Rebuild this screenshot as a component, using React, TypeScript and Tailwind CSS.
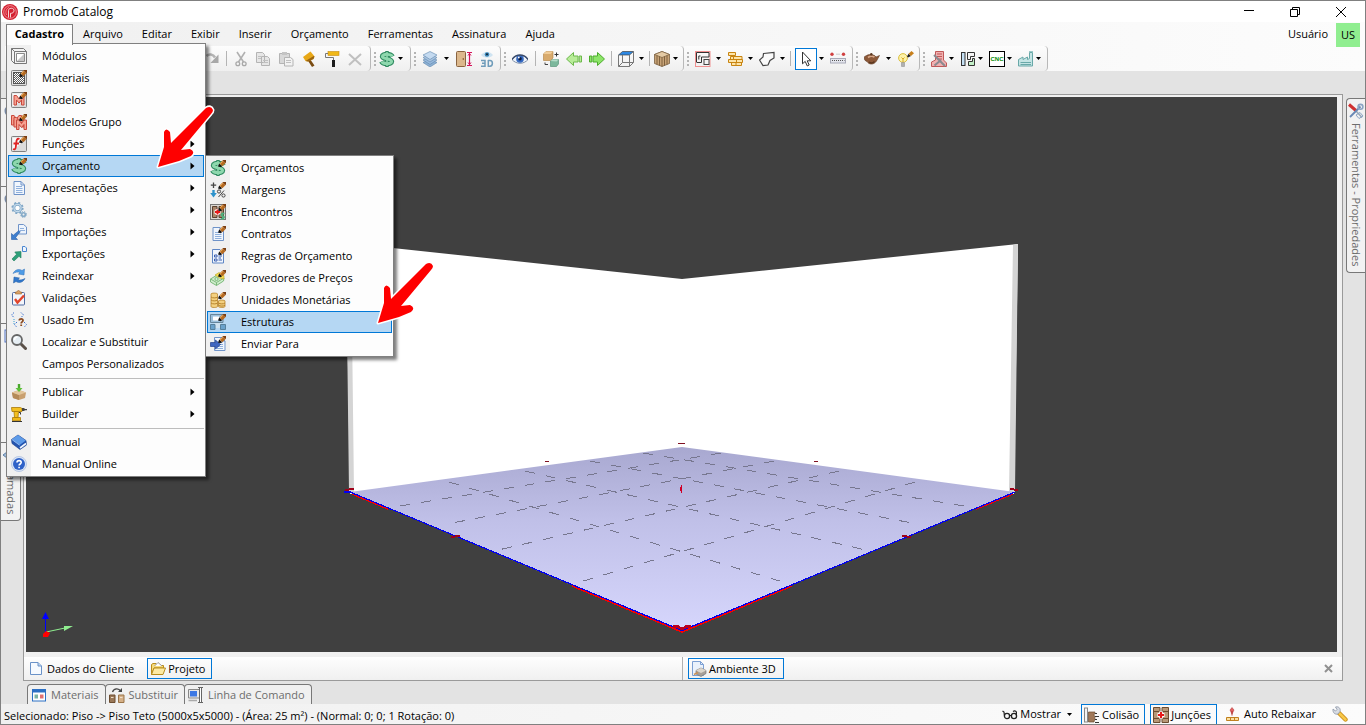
import React from "react";

type IconProps = { children: React.ReactNode; size?: string };

function Ic({ children, size = "size-4" }: IconProps) {
  return (
    <svg viewBox="0 0 16 16" className={`${size} shrink-0`} fill="none" aria-hidden="true">
      {children}
    </svg>
  );
}

const Pencil = () => (
  <g>
    <path d="M8 6.5 L9.2 3.6 L12 6 L11 7.2 Z" fill="#151515" />
    <path d="M9.5 3.6 L12.5 0.6 L15.6 3 L12.4 6.2 Z" fill="#b5691f" />
    <path d="M12.5 0.6 L13.4 0 H16 V2.4 L15.6 3 Z" fill="#7a3d10" />
    <path d="M10.2 3.9 L12.8 1.4" stroke="#f0b060" />
  </g>
);

const Frame = () => (
  <g>
    <rect x="0.5" y="0.5" width="15" height="15" rx="1" fill="#dcdcdc" stroke="#808080" />
    <path d="M1.5 1.5 H14 V3 L3 14 H1.5 Z" fill="#f8f8f8" />
  </g>
);

const MShape = () => <path d="M3 13 V3.5 H5.6 L8 7 L10.4 3.5 H13 V13 H10.5 V8 L8 11 L5.5 8 V13 Z" fill="#f6a090" stroke="#c8483c" />;

const Dollar = () => (
  <g>
    <path d="M8 0 V16" stroke="#2f8a60" strokeWidth="3.4" />
    <path d="M13.4 5.6 C12 2.6 3.2 2.4 3.2 5.4 C3.2 8.4 12.8 7.4 12.8 10.6 C12.8 13.6 3.8 13.4 2.4 10.4" stroke="#2f8a60" strokeWidth="4.8" />
    <path d="M8 1 V15" stroke="#9adcb6" strokeWidth="1.4" />
    <path d="M13.2 5.4 C11.8 2.8 3.4 2.6 3.4 5.4 C3.4 8.2 12.6 7.4 12.6 10.6 C12.6 13.4 4 13.2 2.8 10.6" stroke="#8ed8ae" strokeWidth="3" />
  </g>
);

const Page = () => (
  <g>
    <path d="M3 1.5 H10 L13.5 5 V14.5 H3 Z" fill="#f1f6fd" stroke="#6f93c8" />
    <path d="M10 1.5 V5 H13.5" stroke="#6f93c8" />
    <path d="M5 6.5 H11 M5 8.5 H11.5 M5 10.5 H11.5 M5 12.5 H11.5" stroke="#8fb0dc" />
  </g>
);

const I = {
  modules: (
    <Ic>
      <path d="M0.5 0.5 H12.5 L15.5 3.5 V15.5 H3.5 L0.5 12.5 Z" fill="#f3f3f3" stroke="#777" />
      <path d="M3.5 3.5 H15.5 M3.5 3.5 V15.5 M0.5 0.5 L3.5 3.5" stroke="#777" />
      <path d="M5.5 5.5 H13.5 V13.5 H5.5 Z" fill="#fff" stroke="#8a8a8a" />
      <path d="M13 6 V13 H6 Z" fill="#c6c6c6" />
    </Ic>
  ),
  materials: (
    <Ic>
      <Frame />
      <rect x="2.5" y="2.5" width="11" height="11" fill="#fff" stroke="#555" />
      <path d="M3 3.5 H13 M3 5.5 H13 M3 7.5 H13 M3 9.5 H13 M3 11.5 H13" stroke="#555" strokeDasharray="1 1" />
      <path d="M4 4.5 H13 M4 6.5 H13 M4 8.5 H13 M4 10.5 H13 M4 12.5 H13" stroke="#666" strokeDasharray="1 1" />
      <Pencil />
    </Ic>
  ),
  models: (<Ic><Frame /><MShape /><Pencil /></Ic>),
  group: (
    <Ic>
      <g transform="translate(-2.5 -2)"><MShape /></g>
      <g><MShape /></g>
      <g transform="translate(2.5 2.5)"><MShape /></g>
      <Pencil />
    </Ic>
  ),
  func: (
    <Ic>
      <Frame />
      <path d="M8.5 3 C6 2 5.5 4 5.2 7 L4.8 11 C4.6 13.4 3.4 13.6 2 13 M2.5 7.5 H8" stroke="#e02424" strokeWidth="1.8" />
      <Pencil />
    </Ic>
  ),
  budget: (<Ic><Dollar /><Pencil /></Ic>),
  dollar: (<Ic><Dollar /></Ic>),
  page: (<Ic><Page /></Ic>),
  gears: (
    <Ic>
      <circle cx="6.5" cy="6" r="5.2" stroke="#7fa6c6" strokeWidth="1.8" strokeDasharray="2 2.1" />
      <circle cx="6.5" cy="6" r="3.6" fill="#fff" stroke="#7fa6c6" strokeWidth="2.6" />
      <circle cx="6.5" cy="6" r="3.6" stroke="#c4daec" strokeWidth="1.2" />
      <circle cx="12.5" cy="12.5" r="1.8" stroke="#86abc8" strokeWidth="1.6" />
      <circle cx="12.5" cy="12.5" r="3" stroke="#86abc8" strokeDasharray="1.2 1.2" />
    </Ic>
  ),
  imports: (
    <Ic>
      <path d="M7.5 0.5 H12.5 L15.5 3 V10 H7.5 Z" fill="#eef4fc" stroke="#6f93c8" />
      <path d="M9 4.5 H13 M9 6.5 H14" stroke="#8fb0dc" />
      <path d="M0.5 15.5 V9.5 L2.3 11.2 L8 6.5 L9.2 7.8 L4.7 13.5 L6.5 15.5 Z" fill="#3f7fce" stroke="#2b5fa8" strokeWidth="0.6" />
    </Ic>
  ),
  exports: (
    <Ic>
      <path d="M11.5 0.5 H14 L15.5 2 V5.5 H11.5 Z" fill="#eef4fc" stroke="#4a86d0" />
      <path d="M10 5.5 V12 L8 10.3 L3 15 L1 13 L5.5 8.3 L3.8 6 Z" fill="#2fa07a" stroke="#1f7d5c" strokeWidth="0.6" />
    </Ic>
  ),
  reindex: (
    <Ic>
      <path d="M2 5.5 C4 1.5 8 0.5 11 2.5 L13.5 1 L13 7 L7.5 6 L9 4.6 C7 3.6 4.5 4.2 2 5.5 Z" fill="#4d9be6" stroke="#2f6fb8" strokeWidth="0.5" />
      <path d="M14 10.5 C12 14.5 8 15.5 5 13.5 L2.5 15 L3 9 L8.5 10 L7 11.4 C9 12.4 11.5 11.8 14 10.5 Z" fill="#2f77cc" stroke="#215aa0" strokeWidth="0.5" />
    </Ic>
  ),
  valid: (
    <Ic>
      <rect x="1.5" y="2.5" width="12" height="12.5" rx="1" fill="#f3f5fb" stroke="#4f6aa0" />
      <path d="M4.5 4 V2 H6 C6 0 9 0 9 2 H10.5 V4 Z" fill="#d9a066" stroke="#a06a30" strokeWidth="0.6" />
      <path d="M4 9 L6.5 12.5 L13 5.5" stroke="#e2452c" strokeWidth="2.4" />
    </Ic>
  ),
  used: (
    <Ic>
      <path d="M3 0.5 L0.5 3 L3 5.5 M10 0.5 L12.5 3 L10 5.5 M6 10 L3.5 12.5 L6 15.5 M13 10 L15.5 12.5 L13 15.5" stroke="#3a6fd0" strokeDasharray="1.5 1" />
      <path d="M3 7 V12" stroke="#3aa0d0" strokeDasharray="1 1" />
      <path d="M8.3 8.5 C8.3 6.2 12 6.2 12 8.5 C12 10 10.2 9.8 10.2 11.4 M10.2 12.4 V14" stroke="#8a4a20" strokeWidth="1.8" />
    </Ic>
  ),
  find: (
    <Ic>
      <path d="M9.5 9.5 L14.5 14.5" stroke="#5a5048" strokeWidth="3" strokeLinecap="round" />
      <circle cx="6" cy="6" r="5" fill="#e6eef4" stroke="#666" strokeWidth="1.8" />
      <path d="M3.5 6 C3.5 4 5 3 6.5 3" stroke="#fff" strokeWidth="1.4" />
    </Ic>
  ),
  publish: (
    <Ic>
      <path d="M1 8.5 L8 6 L15 8.5 L14 14 L8 16 L2 14 Z" fill="#c9a070" />
      <path d="M1 8.5 L8 11 V16 L2 14 Z" fill="#b48a58" />
      <path d="M1 8.5 L8 6 L15 8.5 L8 11 Z" fill="#e2c69c" />
      <path d="M8 0 V5" stroke="#4aa82c" strokeWidth="2.4" />
      <path d="M4.5 4 H11.5 L8 8 Z" fill="#5cc038" />
    </Ic>
  ),
  drill: (
    <Ic>
      <path d="M0.5 1.5 H9.5 L11 2.5 V5.5 H1 Z" fill="#f4c020" stroke="#a87a08" strokeWidth="0.8" />
      <path d="M11 2 H13.5 V5 H11 Z M13.5 3 H16 V4.2 H13.5 Z" fill="#444" />
      <path d="M3 5.5 H7.5 L7 11.5 H3.5 Z" fill="#f4c020" stroke="#a87a08" strokeWidth="0.8" />
      <path d="M1.5 11.5 H9.5 V14.8 H1.5 Z" fill="#f0b818" stroke="#a87a08" strokeWidth="0.8" />
      <path d="M8 6.5 H9.5 V8.5 M1 15.5 H11" stroke="#333" />
    </Ic>
  ),
  book: (
    <Ic>
      <path d="M0.5 5.5 L7 1 L15 6.5 L15.5 11 L9 15.5 L1 9.5 Z" fill="#2455b0" stroke="#173c86" strokeWidth="0.6" />
      <path d="M0.8 5.3 L7 1 L14.8 6.5 L8.6 11 Z" fill="#5e9be8" />
      <path d="M9 14 L15 9.5" stroke="#f4f8ff" strokeWidth="1.6" />
      <path d="M1 5.6 L8.6 11.2" stroke="#a8ccf8" strokeWidth="0.8" />
    </Ic>
  ),
  help: (
    <Ic>
      <circle cx="8" cy="8" r="7.5" fill="#dce6f6" stroke="#b8c8e4" />
      <circle cx="8" cy="8" r="6" fill="#2f62c8" />
      <path d="M6 6.5 C6 4 10.2 4 10.2 6.5 C10.2 8 8.1 8 8.1 9.6 M8.1 10.8 V12.2" stroke="#fff" strokeWidth="1.6" />
    </Ic>
  ),
  margins: (
    <Ic>
      <path d="M3.5 0.5 V6 M0.8 3.2 H6.2" stroke="#444" strokeWidth="1.3" />
      <path d="M3.5 8 V12" stroke="#2e93cc" strokeWidth="2.4" />
      <path d="M0.2 11 H6.8 L3.5 15.5 Z" fill="#2e93cc" />
      <circle cx="9" cy="9.5" r="1.6" stroke="#444" /><circle cx="13.5" cy="13.5" r="1.6" stroke="#444" />
      <path d="M14 8.5 L8.5 15" stroke="#444" />
      <Pencil />
    </Ic>
  ),
  meets: (
    <Ic>
      <rect x="0.5" y="0.5" width="15" height="15" fill="#dcd8d2" stroke="#777" />
      <path d="M2.5 2.5 H7 V13.5 H2.5 Z M9 2.5 H13.5 V13.5 H9 Z" fill="#a88468" stroke="#5a4030" />
      <path d="M7.5 5 V11 M4.5 8 H10.5" stroke="#fff" strokeWidth="3.6" />
      <path d="M7.5 5.5 V10.5 M5 8 H10" stroke="#e81818" strokeWidth="2" />
      <path d="M14.5 9.5 C10.5 8.5 10.5 12 12.7 12 C15.2 12.5 14.5 15.5 10.8 14.5 M12.7 8.5 V16" stroke="#4fae7c" strokeWidth="1.4" />
      <Pencil />
    </Ic>
  ),
  contract: (<Ic><Page /><Pencil /></Ic>),
  rules: (
    <Ic>
      <path d="M2.5 1.5 H10 L13.5 5 V15 H2.5 Z" fill="#f1f6fd" stroke="#5f86c4" />
      <path d="M4.5 7 H7 V9 H4.5 Z M4.5 11 H7 V13 H4.5 Z" stroke="#3a5fb0" />
      <path d="M8.5 8 H12 M8.5 12 H12 M8.5 10 H11" stroke="#3a5fb0" />
      <Pencil />
    </Ic>
  ),
  providers: (
    <Ic>
      <path d="M0.5 9 L8 4.5 L14 8 L13.5 11 L6.5 15.5 L0.5 12 Z" fill="#cfeccc" stroke="#7cba7c" />
      <path d="M0.5 9 L6.5 12.5 L14 8 M6.5 12.5 V15.5" stroke="#7cba7c" />
      <path d="M5 5 L9 2.5 L14 5.5 V9 L9.5 8 Z" fill="#f4dc50" stroke="#b8a020" strokeWidth="0.6" />
      <circle cx="6.5" cy="9" r="1.6" stroke="#7cba7c" />
      <Pencil />
    </Ic>
  ),
  coins: (
    <Ic>
      <path d="M1 2 C1 0.8 7.5 0.8 7.5 2 V14.5 C7.5 15.8 1 15.8 1 14.5 Z" fill="#f3d080" stroke="#b8842c" strokeWidth="0.8" />
      <path d="M1 5 C2.5 6.2 6 6.2 7.5 5 M1 8 C2.5 9.2 6 9.2 7.5 8 M1 11 C2.5 12.2 6 12.2 7.5 11" stroke="#b8842c" />
      <path d="M8.5 9 C8.5 7.8 15 7.8 15 9 V14.5 C15 15.8 8.5 15.8 8.5 14.5 Z" fill="#f3d080" stroke="#b8842c" strokeWidth="0.8" />
      <path d="M8.5 11 C10 12.2 13.5 12.2 15 11 M8.5 13.2 C10 14.4 13.5 14.4 15 13.2" stroke="#b8842c" />
      <Pencil />
    </Ic>
  ),
  structures: (
    <Ic>
      <path d="M0.5 0.5 H13 V8.5 H0.5 Z" fill="#9cc0dc" stroke="#66869c" />
      <path d="M3 2.5 H9 V6.5 H3 Z" fill="#fff" />
      <path d="M4.5 9 H11 V14 H4.5 Z" fill="#cfe2f0" />
      <path d="M0.5 10.5 H5 V15.5 H0.5 Z M10.5 10.5 H15.5 V15.5 H10.5 Z" fill="#6aa2cc" stroke="#56809c" />
      <Pencil />
    </Ic>
  ),
  send: (
    <Ic>
      <g transform="translate(1.5 0)"><Page /></g>
      <path d="M0.5 6.5 H5.5 V4 L10.5 8.5 L5.5 13 V10.5 H0.5 Z" fill="#3f66c0" stroke="#223f8c" strokeWidth="0.7" />
      <Pencil />
    </Ic>
  ),
  redo: (<Ic><path d="M2.5 5 C5 2.5 9 3 11 6.5" stroke="#b4b4b4" strokeWidth="2.6" /><path d="M14.5 3.5 V12 H6.5 Z" fill="#a8a8a8" /></Ic>),
  cut: (
    <Ic>
      <path d="M4 1 L10.5 11 M12 1 L5.5 11" stroke="#b0b0b0" strokeWidth="1.6" />
      <circle cx="4.8" cy="12.8" r="1.9" stroke="#a8a8a8" strokeWidth="1.3" /><circle cx="11.2" cy="12.8" r="1.9" stroke="#a8a8a8" strokeWidth="1.3" />
    </Ic>
  ),
  copy: (
    <Ic>
      <path d="M1.5 1.5 H7.5 L9.5 3.5 V11.5 H1.5 Z M6.5 5.5 H12.5 L14.5 7.5 V14.5 H6.5 Z" fill="#e6e6e6" stroke="#b4b4b4" />
      <path d="M3 5.5 H6 M3 7.5 H6 M8 9.5 H13 M8 11.5 H13" stroke="#c0c0c0" />
    </Ic>
  ),
  paste: (
    <Ic>
      <path d="M1.5 2.5 H11.5 V12.5 H1.5 Z" fill="#d8d8d8" stroke="#b4b4b4" />
      <path d="M4 1 H9 V4 H4 Z" fill="#c4c4c4" />
      <path d="M6.5 6.5 H12.5 L15 8.5 V15 H6.5 Z" fill="#f2f2f2" stroke="#b4b4b4" />
      <path d="M8 9.5 H13 M8 11.5 H13" stroke="#c0c0c0" />
    </Ic>
  ),
  hammer: (
    <Ic>
      <path d="M9 8 L13.5 14.5 L11 16 L6.8 9.5 Z" fill="#7a4c12" />
      <path d="M2 6 L9.5 0.5 L12 3.5 L13.5 5.5 L12.5 8 L7 10.5 L4.5 10 Z" fill="#e8a818" />
      <path d="M4.5 10 L12.8 5 L13.5 5.5 L12.5 8 L7 10.5 Z" fill="#9a6410" />
    </Ic>
  ),
  roller: (
    <Ic>
      <rect x="4" y="0.5" width="11" height="4" fill="#f0b818" stroke="#c88c10" strokeWidth="0.6" />
      <path d="M4 2.5 H1.5 V6.5 H9.5 V9" stroke="#777" />
      <path d="M8 9 H11 V16 H8 Z" fill="#1c1c1c" />
    </Ic>
  ),
  del: (<Ic><path d="M2 3 L14 14 M14 3 L2 14" stroke="#c0c0c0" strokeWidth="2" /></Ic>),
  layers: (
    <Ic>
      <path d="M1 11.5 L8 8 L15 11.5 L8 16 Z" fill="#8cb0d4" stroke="#5f86ac" strokeWidth="0.6" />
      <path d="M1 9 L8 5.5 L15 9 L8 13.5 Z" fill="#98bade" stroke="#5f86ac" strokeWidth="0.6" />
      <path d="M1 6.5 L8 3 L15 6.5 L8 11 Z" fill="#a8c4e0" stroke="#5f86ac" strokeWidth="0.6" />
      <path d="M1 4 L8 0.5 L15 4 L8 8.5 Z" fill="#c4daf0" stroke="#5f86ac" strokeWidth="0.6" />
    </Ic>
  ),
  door: (
    <Ic>
      <rect x="0.5" y="0.5" width="9" height="15" rx="1" fill="#dcb88c" stroke="#8a6440" />
      <circle cx="7.3" cy="8" r="0.8" fill="#6a4420" />
      <path d="M11 1.5 H16 M11 14.5 H16 M13.5 2 V14" stroke="#d4145a" strokeWidth="1.2" />
      <path d="M12 4.5 L13.5 2.5 L15 4.5 M12 11.5 L13.5 13.5 L15 11.5" stroke="#d4145a" />
    </Ic>
  ),
  view3d: (
    <Ic>
      <path d="M2 4 C5 0 11 0 14 4 C11 7.5 5 7.5 2 4 Z" fill="#cfe4f2" />
      <circle cx="8" cy="3.5" r="2.3" fill="#3a86b8" /><circle cx="8" cy="3.2" r="1" fill="#123" />
      <path d="M2 9.5 H6 V15.2 H2 M3 12.3 H6 M9.3 9 V15.2 H11 C14.2 15.2 14.2 9.5 11 9.5 H9" stroke="#6f9cba" strokeWidth="1.5" />
    </Ic>
  ),
  eye: (
    <Ic>
      <path d="M0 8.5 C4 3 12 3 16 8.5 C12 13.5 4 13.5 0 8.5 Z" fill="#eef3fa" stroke="#8090a8" />
      <circle cx="8" cy="8" r="3.8" fill="#3468c0" /><circle cx="8" cy="7.8" r="1.8" fill="#0c1c40" /><circle cx="6.8" cy="6.5" r="0.9" fill="#fff" />
      <path d="M0 8.5 C4 2.5 12 2.5 16 8.5" stroke="#384a6c" strokeWidth="1.4" />
    </Ic>
  ),
  boxes: (
    <Ic>
      <path d="M0.5 3 L3 0.5 H10 V7 L7.5 9.5 H0.5 Z" fill="#d8aa6c" stroke="#b08040" strokeWidth="0.6" />
      <path d="M0.5 3 L3 0.5 H10 L7.5 3 Z" fill="#f0cc98" />
      <path d="M7.5 10 L9.5 8.5 H15.5 V13 L13.5 15.5 H7.5 Z" fill="#7cb89c" stroke="#4c8c70" strokeWidth="0.6" />
      <path d="M7.5 10 L9.5 8.5 H15.5 L13.5 10.5 Z" fill="#b4dcc8" />
      <path d="M13.5 1.5 V5.5 M11.5 3.5 H15.5" stroke="#333" />
      <path d="M2 11.5 V13.5 H5" stroke="#444" />
    </Ic>
  ),
  left: (<Ic><path d="M0.5 8 L7.5 1.5 V5 H12 V11 H7.5 V14.5 Z M13.2 5 H15.5 V11 H13.2 Z" fill="#b8ec98" stroke="#6cb84c" /></Ic>),
  right: (<Ic><path d="M15.5 8 L8.5 1.5 V5 H4 V11 H8.5 V14.5 Z M2.8 5 H0.5 V11 H2.8 Z" fill="#8ce468" stroke="#4cac2c" /></Ic>),
  cube: (
    <Ic>
      <path d="M0.5 4 L4.5 0.5 H15.5 L11.5 4 Z" fill="#2c88e4" stroke="#444" strokeWidth="0.7" />
      <path d="M0.5 4 V15.5 H11.5 V4 M11.5 15.5 L15.5 11.5 V0.5 M4.5 4 V11.5 H15.5 M4.5 11.5 L0.5 15.5" stroke="#777" />
    </Ic>
  ),
  wood: (
    <Ic>
      <path d="M0.5 3.5 L8 0.5 L15.5 3.5 V12.5 L8 15.5 L0.5 12.5 Z" fill="#c8a478" stroke="#6c5030" strokeWidth="0.7" />
      <path d="M0.5 3.5 L8 0.5 L15.5 3.5 L8 6.5 Z" fill="#e4caa4" stroke="#6c5030" strokeWidth="0.6" />
      <path d="M8 6.5 V15.5 M3 4.5 V13.5 M5.5 5.5 V14.5 M10.5 5.5 V14.5 M13 4.5 V13.5" stroke="#6c5030" strokeWidth="0.8" />
    </Ic>
  ),
  plan: (
    <Ic>
      <rect x="0.5" y="0.5" width="14.5" height="15" stroke="#f09090" />
      <path d="M1.5 11 V1.5 H14 V6 H6.5 V11.5 H1.5 M5.5 5 H3.8 V8.5" stroke="#333" />
      <rect x="9" y="8.5" width="5" height="5" stroke="#444" />
    </Ic>
  ),
  bricks: (
    <Ic>
      <path d="M1.5 1.5 H8.5 V4.5 H1.5 Z M3.5 5.5 H6.5 V8.5 H3.5 Z M6.5 5.5 H15 V8.5 H6.5 Z M1.5 8.5 H9.5 V11.5 H1.5 Z M9.5 8.5 H15.5 V11.5 H9.5 Z M4.5 11.5 H14.5 V14.5 H4.5 Z M9 11.5 V14.5" fill="#fde4a8" stroke="#c88410" />
    </Ic>
  ),
  shape: (<Ic><path d="M4.5 2.5 L15 1.5 V7 L11 9.5 L9 14 L4 14.5 L0.5 9 L4 6 Z" fill="#fafafa" stroke="#444" strokeWidth="1.2" /></Ic>),
  pointer: (<Ic><path d="M4.5 1 V12.8 L7.2 10.4 L9.3 15 L11.2 14 L9.2 9.8 H12.8 Z" fill="#fff" stroke="#333" /></Ic>),
  ruler: (
    <Ic>
      <circle cx="2" cy="3.2" r="1.7" fill="#d04040" /><circle cx="13.5" cy="3.2" r="1.7" fill="#d04040" />
      <path d="M6 3.2 H10" stroke="#ccc" /><rect x="0.5" y="7.5" width="15" height="4.5" fill="#e4e6ee" stroke="#a8aab8" />
      <path d="M2 9.5 H14.5" stroke="#555" strokeDasharray="1 1" />
    </Ic>
  ),
  teapot: (
    <Ic>
      <path d="M2 5 C4 3 10 3 12 6 L15.5 4.5 L12.5 10 C10 14 5 14 3 10.5 C0 10 -1 5 2 5 Z" fill="#8c5838" stroke="#5c3820" strokeWidth="0.6" />
      <path d="M4 6.5 C6 5 9 5 10.5 6.2" stroke="#d8a888" strokeWidth="1.6" /><circle cx="7.3" cy="3.2" r="1.2" fill="#5c3820" />
      <path d="M5 11 C7 12.5 9 12 10.5 10.5" stroke="#5c3820" strokeWidth="1.4" />
    </Ic>
  ),
  bulb: (
    <Ic>
      <circle cx="5" cy="7" r="4.4" fill="#fdf2a8" stroke="#dcc040" />
      <path d="M3.5 11.5 H6.5 V15.5 H3.5 Z" fill="#b0b0b0" stroke="#888" strokeWidth="0.5" />
      <path d="M5 11 V7 M3.5 6.5 L5 8 L6.5 6.5" stroke="#d8a820" />
      <path d="M9 5.5 L10.5 2.8 L13 5 L10 6.5 Z" fill="#222" /><path d="M10.5 2.8 L13.5 0 L16 2.2 L13 5 Z" fill="#c8801c" />
    </Ic>
  ),
  stack: (
    <Ic>
      <path d="M4.5 0.5 H12.5 V9 L15.5 12 V15.5 H0.5 V11 L4.5 9 Z" fill="#f0b0b0" stroke="#c05858" />
      <path d="M6 3 H11 M6 5.5 H11 M6 8 H11" stroke="#c05858" />
      <path d="M3 4 L14 15 M3.5 14.5 L10 9" stroke="#8a8a90" strokeWidth="2" />
    </Ic>
  ),
  parts: (
    <Ic>
      <rect x="1.5" y="1.5" width="3.5" height="13" fill="#c4e0f4" stroke="#333" />
      <path d="M7.5 1.5 H14.5 V5.5 H10.5 V8.5 H7.5 Z" fill="#f4f4f4" stroke="#333" />
      <path d="M12.5 7.5 H14.5 V14.5 H8.5 V10.5 H12.5 Z" fill="#c4f0c8" stroke="#333" />
    </Ic>
  ),
  factory: (
    <Ic>
      <path d="M0.5 15 V8.5 L5 6 V8.5 L9.5 6 V8.5 L11.5 7.5 V1.5 H14.5 V15 Z" fill="#c4e4e4" stroke="#68a8a8" />
      <path d="M2.5 11.5 H13 M2.5 13.5 H13" stroke="#68a8a8" /><path d="M11 0.5 H15" stroke="#9cc8c8" />
    </Ic>
  ),
  tools: (
    <Ic>
      <path d="M1 1.5 L8.5 8" stroke="#d03030" strokeWidth="3" /><path d="M8 8 L14 14.5" stroke="#98a8b8" strokeWidth="1.6" />
      <path d="M12.5 3.5 L2 14" stroke="#6888b4" strokeWidth="1.8" /><circle cx="12.5" cy="3.8" r="2.4" stroke="#8ca4c4" strokeWidth="1.6" />
      <path d="M8 12 L12 9.5 L15 13 L11 15.5 Z" stroke="#8ca4c4" />
    </Ic>
  ),
  blank: (<Ic><path d="M2.5 1.5 H10 L13.5 5 V13.5 H2.5 Z" fill="#f6faff" stroke="#6a92c8" /><path d="M10 1.5 V5 H13.5" fill="#bcd4f0" stroke="#6a92c8" /></Ic>),
  folder: (
    <Ic>
      <path d="M1.5 13.5 V3.5 L3 2.5 H6 L7 4.5 H13.5 V7 H4 Z" fill="#f8dc7c" stroke="#b88c1c" />
      <path d="M4.5 5 L8 1.5 L12 5" fill="#fff" stroke="#999" />
      <path d="M1.5 13.5 L4 7 H15.5 L13 13.5 Z" fill="#fdeaa4" stroke="#b88c1c" />
    </Ic>
  ),
  ambient: (
    <Ic>
      <path d="M1.5 0.5 H9.5 L12.5 3.5 V14.5 H1.5 Z" fill="#eaf2fc" stroke="#7ca0d4" />
      <path d="M9.5 0.5 V3.5 H12.5" stroke="#7ca0d4" />
      <path d="M5 9.5 L10 7 L15 9.5 V12.5 L10 15.5 L5 13 Z" fill="#a8a098" stroke="#777" strokeWidth="0.7" />
      <path d="M5 9.5 L10 12 L15 9.5 L10 7 Z" fill="#dcd6cc" /><path d="M3 13.5 L7 11.5" stroke="#c89058" strokeWidth="1.4" />
    </Ic>
  ),
  matTab: (
    <Ic>
      <rect x="1.5" y="2.5" width="13" height="11.5" fill="#fff" stroke="#2c70c4" />
      <path d="M1.5 4 H14.5" stroke="#2c70c4" strokeWidth="3" />
      <path d="M3.5 7.5 H7 V11.5 H3.5 Z" fill="#7cb4a4" /><path d="M9 7.5 H12.5 V11.5 H9 Z" fill="#e07070" />
    </Ic>
  ),
  swap: (
    <Ic>
      <path d="M0.5 8 H6 V15.5 H0.5 Z" fill="#9a7858" stroke="#6c4c30" /><path d="M9.5 8 H15 V15.5 H9.5 Z" fill="#d4b088" stroke="#9a7448" />
      <path d="M2 10.5 H4.5 M11 10.5 H13.5" stroke="#efe0cc" /><path d="M3.5 5 C5 1 10 1 11.5 4" stroke="#444" strokeWidth="1.3" /><path d="M9 5 H13 V1 Z" fill="#444" />
    </Ic>
  ),
  command: (
    <Ic>
      <path d="M0.5 2.5 H12 V11 H0.5 Z" fill="#e8e8e8" stroke="#888" /><path d="M2 4 H9 V9.5 H2 Z" fill="#3c78e4" />
      <path d="M0.5 13.5 H9" stroke="#aaa" strokeWidth="1.5" />
      <path d="M11.5 1 H13.5 V15 H11.5 Z" fill="#fff" />
      <path d="M10 0.5 H15 M11.5 1 V15 M13.5 1 V15 M10 15.5 H15" stroke="#666" />
    </Ic>
  ),
  glasses: (
    <Ic>
      <circle cx="5" cy="10" r="2.6" stroke="#222" strokeWidth="1.3" /><circle cx="12" cy="10" r="2.6" stroke="#222" strokeWidth="1.3" />
      <path d="M7.5 9.5 H9.5 M2.4 9.5 L2 6 L0.5 5 M14.4 9.5 V6 C13.6 4.6 12 4.8 11 5.5" stroke="#222" strokeWidth="1.2" />
    </Ic>
  ),
  collide: (
    <Ic>
      <rect x="0.5" y="1" width="3" height="14" fill="#f4f4f4" stroke="#888" />
      <path d="M4.5 5 H11 L10 8 L11 11 L10 15 H4.5 Z" fill="#a07858" stroke="#6c4c30" strokeWidth="0.7" />
      <path d="M11 6.5 H13 M11 9.5 H15 M11 12.5 H13 M11 15.5 H15" stroke="#333" />
    </Ic>
  ),
  joints: (
    <Ic>
      <path d="M0.5 0.5 H7 V15.5 H0.5 Z M9 0.5 H15.5 V15.5 H9 Z" fill="#b89878" stroke="#6c4c30" />
      <path d="M0.5 4.5 H7 M0.5 11.5 H7 M9 4.5 H15.5 M9 11.5 H15.5" stroke="#6c4c30" />
      <path d="M8 4.5 V11.5 M4.5 8 H11.5" stroke="#fff" strokeWidth="4" /><path d="M8 5 V11 M5 8 H11" stroke="#e81818" strokeWidth="2.2" />
    </Ic>
  ),
  lower: (
    <Ic>
      <path d="M7 1.5 L9 4 L7 8 L5 4 Z" fill="#e06060" stroke="#b03030" strokeWidth="0.5" /><path d="M7 5 V9.5" stroke="#b03030" />
      <path d="M1.5 11.5 H13.5 V14.5 H1.5 Z M5.5 11.5 V14.5 M9.5 11.5 V14.5" fill="#fbe0a0" stroke="#c08020" />
    </Ic>
  ),
  wrench: (
    <Ic>
      <path d="M7 7 L13.5 13.5" stroke="#c88c18" strokeWidth="4.4" strokeLinecap="round" /><path d="M7.5 7.5 L13.5 13.5" stroke="#f8c848" strokeWidth="2.6" strokeLinecap="round" />
      <path d="M1 3 L3.5 5 L5 3.5 L3.5 1 C6.5 0 9 2.5 8 5.5 L6 8 C3 9 0.5 6.5 1 3 Z" fill="#d8dce4" stroke="#8a94a4" strokeWidth="0.8" />
    </Ic>
  ),
  ring: (<Ic><circle cx="8" cy="8" r="5.5" stroke="#7788a4" strokeWidth="2" /><circle cx="8" cy="8" r="2" fill="#7788a4" /></Ic>),
  note: (<Ic><rect x="2" y="2" width="12" height="12" fill="#eef4ff" stroke="#5070c0" /></Ic>),
  diamond: (<Ic><path d="M0 8 L8 2 L15 8 L8 14 Z" fill="#a4bcd8" stroke="#5c80a8" /></Ic>),
};

type IconName = keyof typeof I;

function Cnc() {
  return (
    <svg viewBox="0 0 16 16" className="size-4 shrink-0" aria-hidden="true">
      <rect x="0.5" y="0.5" width="15" height="15" fill="#fff" stroke="#000" />
      <text x="8" y="10" textAnchor="middle" fontSize="6" fontWeight="700" fontFamily="Liberation Sans" fill="#008a00">CNC</text>
    </svg>
  );
}

const Caret = () => (
  <svg viewBox="0 0 5 3" className="h-[3px] w-[5px] shrink-0" aria-hidden="true"><path d="M0 0 H5 L2.5 3 Z" fill="#000" /></svg>
);

function Tool({ icon, label, cell = "w-[23px] justify-center", active = false }: { icon: React.ReactNode; label: string; cell?: string; active?: boolean }) {
  return (
    <button type="button" aria-label={label} className={`flex h-[22px] items-center ${cell} ${active ? "border border-[#0078d7] bg-white" : ""}`}>
      {icon}
    </button>
  );
}

function Drop({ label, cell = "w-[9px]" }: { label: string; cell?: string }) {
  return <button type="button" aria-label={label} className={`flex h-[22px] items-center justify-center ${cell}`}><Caret /></button>;
}

const Sep = () => (
  <span className="flex w-[7px] justify-center"><span className="h-[15px] w-px bg-[#b4b4b4]" /></span>
);

function Group({ children, pad }: { children: React.ReactNode; pad: string }) {
  return (
    <div className={`flex h-[25px] items-center rounded-r border-r border-[#b8b8b8] bg-linear-to-b from-[#fdfdfd] to-[#efefef] ${pad}`}>
      <span className="flex w-[7px] flex-col items-center gap-0.5">
        {[0, 1, 2, 3].map((n) => <span key={n} className="size-0.5 bg-[#b4b4b4]" />)}
      </span>
      {children}
    </div>
  );
}

const narrow = "w-[18px] justify-center";
const tail = "w-5 justify-end";

function Toolbar() {
  return (
    <div role="toolbar" aria-label="Ferramentas" className="flex h-[27px] items-end pl-1">
      <div className="flex h-[25px] items-center rounded-r border-r border-[#b8b8b8] bg-linear-to-b from-[#fdfdfd] to-[#efefef] pl-[195px] pr-1">
        <Tool icon={I.redo} label="Refazer" />
        <Sep />
        <Tool icon={I.cut} label="Recortar" cell="w-[21px] justify-center" />
        <Tool icon={I.copy} label="Copiar" />
        <Tool icon={I.paste} label="Colar" />
        <Tool icon={I.hammer} label="Martelo" />
        <Tool icon={I.roller} label="Pintar" />
        <Tool icon={I.del} label="Excluir" />
      </div>
      <Group pad="pr-[5px]">
        <Tool icon={I.dollar} label="Preço" cell={narrow} />
        <Drop label="Opções de preço" />
      </Group>
      <Group pad="pr-0.5">
        <Tool icon={I.layers} label="Camadas" />
        <Drop label="Opções de camadas" cell="w-[11px]" />
        <Tool icon={I.door} label="Dimensões" />
        <Tool icon={I.view3d} label="3D" />
      </Group>
      <Group pad="pr-[3px]">
        <Tool icon={I.eye} label="Visualizar" cell="w-6 justify-center" />
        <Sep />
        <Tool icon={I.boxes} label="Substituir" />
        <Tool icon={I.left} label="Anterior" />
        <Tool icon={I.right} label="Próximo" />
        <Sep />
        <Tool icon={I.cube} label="Vista" cell="w-[22px] justify-center" />
        <Drop label="Opções de vista" />
        <Sep />
        <Tool icon={I.wood} label="Textura" cell={narrow} />
        <Drop label="Opções de textura" />
      </Group>
      <Group pad="pr-[3px]">
        <Tool icon={I.plan} label="Planta" />
        <Drop label="Opções de planta" />
        <Tool icon={I.bricks} label="Paredes" />
        <Drop label="Opções de paredes" />
        <Tool icon={I.shape} label="Forma" />
        <Drop label="Opções de forma" />
        <Sep />
        <Tool icon={I.pointer} label="Selecionar" cell="ml-px w-[22px] justify-center" active />
        <Drop label="Opções de seleção" />
        <Tool icon={I.ruler} label="Medir" />
      </Group>
      <Group pad="pr-0.5">
        <Tool icon={I.teapot} label="Render" />
        <Drop label="Opções de render" cell="w-[11px]" />
        <Tool icon={I.bulb} label="Iluminação" />
      </Group>
      <Group pad="pr-1">
        <Tool icon={I.stack} label="Cortes" cell={tail} />
        <Drop label="Opções de cortes" />
        <Tool icon={I.parts} label="Peças" cell={tail} />
        <Drop label="Opções de peças" />
        <Tool icon={<Cnc />} label="CNC" cell={tail} />
        <Drop label="Opções de CNC" />
        <Tool icon={I.factory} label="Fábrica" cell={tail} />
        <Drop label="Opções de fábrica" />
      </Group>
    </div>
  );
}

function RedArrow({ place }: { place: string }) {
  const shape = "M0 0 L6 -20 L6 -35 Q8 -40 12 -35 L13 -24 L48 -59 Q53 -62 55 -57 Q55 -55 53 -53 L23 -17 L32 -18 Q38 -15 33 -11 L21 -6 Z";
  return (
    <svg viewBox="-4 -64 64 70" className={`pointer-events-none absolute z-30 h-[70px] w-16 ${place}`} aria-hidden="true">
      <path d={shape} fill="#fff" stroke="#fff" strokeWidth="3" strokeLinejoin="round" />
      <path d={shape} fill="#fe0000" />
    </svg>
  );
}

type Entry = { label: string; icon?: IconName; sub?: boolean; gap?: boolean };

const mainMenu: Entry[] = [
  { label: "Módulos", icon: "modules" },
  { label: "Materiais", icon: "materials" },
  { label: "Modelos", icon: "models" },
  { label: "Modelos Grupo", icon: "group" },
  { label: "Funções", icon: "func", sub: true },
  { label: "Orçamento", icon: "budget", sub: true },
  { label: "Apresentações", icon: "page", sub: true },
  { label: "Sistema", icon: "gears", sub: true },
  { label: "Importações", icon: "imports", sub: true },
  { label: "Exportações", icon: "exports", sub: true },
  { label: "Reindexar", icon: "reindex", sub: true },
  { label: "Validações", icon: "valid" },
  { label: "Usado Em", icon: "used" },
  { label: "Localizar e Substituir", icon: "find" },
  { label: "Campos Personalizados" },
  { label: "Publicar", icon: "publish", sub: true, gap: true },
  { label: "Builder", icon: "drill", sub: true },
  { label: "Manual", icon: "book", gap: true },
  { label: "Manual Online", icon: "help" },
];

const subMenu: Entry[] = [
  { label: "Orçamentos", icon: "budget" },
  { label: "Margens", icon: "margins" },
  { label: "Encontros", icon: "meets" },
  { label: "Contratos", icon: "contract" },
  { label: "Regras de Orçamento", icon: "rules" },
  { label: "Provedores de Preços", icon: "providers" },
  { label: "Unidades Monetárias", icon: "coins" },
  { label: "Estruturas", icon: "structures" },
  { label: "Enviar Para", icon: "send" },
];

function MenuList({ items, active, children, place }: { items: Entry[]; active: string; children?: React.ReactNode; place: string }) {
  return (
    <ul role="menu" className={`absolute border border-[#808080] bg-linear-to-r from-[#f0f0f0] from-[24px] to-[#fdfdfd] to-[24px] py-px shadow-[3px_3px_3px_rgba(0,0,0,0.5)] ${place}`}>
      {items.map((it) => (
        <li key={it.label} role="none" className="relative px-px">
          {it.gap && <div role="separator" className="ml-[31px] flex h-1.5 items-center"><span className="h-px w-full bg-[#bdbdbd]" /></div>}
          <button
            type="button"
            role="menuitem"
            className={`flex h-[22px] w-full items-center border pl-0.5 pr-2 text-left ${it.label === active ? "border-[#0078d7] bg-[#b5d7f3]" : "border-transparent"}`}
          >
            <span className="w-4">{it.icon && I[it.icon]}</span>
            <span className="ml-[15px] flex-1">{it.label}</span>
            {it.sub && <svg viewBox="0 0 5 8" className="h-2 w-[5px]" aria-hidden="true"><path d="M0.5 0.5 L4.5 4 L0.5 7.5 Z" fill="#000" /></svg>}
          </button>
          {it.label === active && children}
        </li>
      ))}
    </ul>
  );
}

function MenuBar() {
  return (
    <div className="relative z-20 flex h-[22px] items-start pl-[5px]">
      <nav className="flex" aria-label="Menu principal">
        <div className="relative mt-0.5">
          <button type="button" className="relative z-10 h-[21px] w-[67px] border border-b-0 border-[#808080] bg-[#fdfdfd] pb-0.5 text-center text-[11px] font-bold">Cadastro</button>
          <MenuList items={mainMenu} active="Orçamento" place="left-0 top-[19px] w-[200px]">
            <MenuList items={subMenu} active="Estruturas" place="left-[198px] top-0 w-[189px] z-20">
              <RedArrow place="right-[-45px] top-[-52px]" />
            </MenuList>
            <RedArrow place="right-[-13px] top-[-52px]" />
          </MenuList>
        </div>
        {["Arquivo", "Editar", "Exibir", "Inserir", "Orçamento", "Ferramentas", "Assinatura", "Ajuda"].map((m) => (
          <button key={m} type="button" className="mt-0.5 h-5 pl-2.5 pr-[9px]">{m}</button>
        ))}
      </nav>
      <div className="ml-auto flex items-center gap-2 pr-[5px] pt-px">
        <span className="pb-0.5">Usuário</span>
        <span className="flex size-6 items-center justify-center bg-[#90ee90]">US</span>
      </div>
    </div>
  );
}

function Scene() {
  const grid = [
    "M449 482 L793 585", "M525 471 L870 551", "M590 461 L917 524", "M643 453 L970 507",
    "M915 482 L570 585", "M839 471 L494 551", "M774 461 L447 524", "M721 453 L394 507",
  ];
  return (
    <svg viewBox="26 97 1311 555" preserveAspectRatio="xMidYMid slice" className="block h-full w-full" role="img" aria-label="Ambiente 3D">
      <defs>
        <linearGradient id="floor" x1="0" y1="0" x2="0" y2="1">
          <stop offset="0" stopColor="#a8a8d0" />
          <stop offset="0.4" stopColor="#c0c0e8" />
          <stop offset="1" stopColor="#d6d6fc" />
        </linearGradient>
      </defs>
      <rect x="26" y="97" width="1311" height="555" fill="#404040" />
      <path d="M346 243 L682 279 L1018 244 L1014 494 L682 456 L350 494 Z" fill="#fff" />
      <path d="M346 243 L351 244 L354 492 L349 492 Z M1013 245 L1018 244 L1015 492 L1009 492 Z" fill="#d4d4d4" />
      <path d="M350 492 L682 447 L1015 492 L682 631 Z" fill="url(#floor)" />
      {grid.map((d) => <path key={d} d={d} stroke="#77778f" strokeDasharray="10 11" fill="none" shapeRendering="crispEdges" />)}
      <g fill="none" shapeRendering="crispEdges">
        <path d="M352 494 L388 509 M572 586 L682 632 L792 586 M976 509 L1013 494" stroke="#f80000" strokeWidth="1.5" />
        <path d="M350 492 L682 630.5 L1015 492" stroke="#0000f0" strokeWidth="1.2" />
        <path d="M345 490 L354 489 M451 537 L460 536 M902 536 L911 537 M1010 489 L1018 490" stroke="#a00018" strokeWidth="2" />
        <path d="M678 443.5 H685 M545 461.5 H549 M814 461.5 H818" stroke="#801020" />
        <path d="M681.5 485 V493" stroke="#d00028" />
        <path d="M680.5 487 V491" stroke="#d00028" />
        <path d="M673 626 H677 L680 628 H684 L687 626 H691" stroke="#b80020" strokeWidth="3" />
        <path d="M344 492 H351" stroke="#0000f0" strokeWidth="2" />
      </g>
      <path d="M45.5 619 V632" stroke="#0000ff" />
      <path d="M42 619 L45.5 612 L49 619 Z" fill="#0000ff" />
      <path d="M46 632 L65 628" stroke="#90ee90" />
      <path d="M64 626 L73 626 L64 631 Z" fill="#90ee90" />
      <path d="M43 634 L46 631 L50 633 L48 637 L43 637 Z" fill="#f00" />
    </svg>
  );
}

function SideTab({ icon, label, box, hint }: { icon: IconName; label?: string; box: string; hint: string }) {
  return (
    <button type="button" aria-label={hint} className={`flex flex-col items-center gap-1 border border-[#787878] bg-[#f2f2f2] text-[#6d6d6d] ${box}`}>
      {I[icon]}
      {label && <span className="[writing-mode:vertical-rl]">{label}</span>}
    </button>
  );
}

function Main() {
  return (
    <main className="flex min-h-0 flex-1 pt-[23px]">
      <aside className="flex w-[22px] shrink-0 flex-col pt-1">
        <SideTab icon="ring" hint="Propriedades" box="h-[89px] w-5 pt-1 border-l-0 rounded-r" />
        <SideTab icon="ring" hint="Busca" box="-mt-px h-[138px] w-5 pt-1 border-l-0 rounded-r" />
        <SideTab icon="note" hint="Biblioteca" box="-mt-px h-[120px] w-5 pt-1 border-l-0 rounded-r" />
        <SideTab icon="diamond" label="Camadas" hint="Camadas" box="-mt-px h-[79px] w-5 pt-1 border-l-0 rounded-r" />
      </aside>
      <section className="flex min-w-0 flex-1 flex-col border border-[#9a9a9a] bg-[#f0f0f0]">
        <div className="min-h-0 flex-1 overflow-hidden pl-0.5 pr-[5px] pt-0.5"><Scene /></div>
        <div className="mt-[5px] flex h-[23px] bg-linear-to-b from-[#fefefe] to-[#f0f0f0]">
          <div className="flex w-1/2 items-center gap-1 border-r border-[#b0b0b0] pl-1">
            <button type="button" className="flex h-[22px] items-center gap-[3px] pr-[9px]">{I.blank}<span>Dados do Cliente</span></button>
            <button type="button" className="flex h-[21px] items-center gap-0.5 border border-[#0078d7] pl-0.5 pr-1.5">{I.folder}<span>Projeto</span></button>
          </div>
          <div className="flex w-1/2 items-center pl-[5px] pr-[9px]">
            <button type="button" className="flex h-[21px] items-center gap-0.5 border border-[#0078d7] pl-0.5 pr-[7px]">{I.ambient}<span>Ambiente 3D</span></button>
            <button type="button" aria-label="Fechar aba" className="ml-auto">
              <svg viewBox="0 0 9 9" className="size-[9px]" aria-hidden="true"><path d="M1 1 L8 8 M8 1 L1 8" stroke="#909090" strokeWidth="2" /></svg>
            </button>
          </div>
        </div>
      </section>
      <aside className="flex w-[22px] shrink-0 justify-end pt-1">
        <SideTab icon="tools" label="Ferramentas - Propriedades" hint="Ferramentas - Propriedades" box="h-[175px] w-[19px] pt-1 border-r-0 rounded-l" />
      </aside>
    </main>
  );
}

const tabs: { label: string; icon: IconName }[] = [
  { label: "Materiais", icon: "matTab" },
  { label: "Substituir", icon: "swap" },
  { label: "Linha de Comando", icon: "command" },
];

export default function App() {
  return (
    <div className="flex h-screen flex-col overflow-hidden border border-[#808080] bg-[#e3e3e3] font-['Open_Sans','Noto_Sans',sans-serif] text-[11px] leading-4 text-black">
      <header className="flex h-[21px] shrink-0 items-center bg-white pl-px">
        <svg viewBox="0 0 16 16" className="size-4" aria-hidden="true">
          <circle cx="8" cy="8" r="8" fill="#d42030" />
          <circle cx="8" cy="8" r="6.3" fill="none" stroke="#f6b4ba" strokeWidth="0.7" />
          <path d="M6.5 13.5 V6.5 C6.5 3.5 12 3.5 12 6.3 C12 9 10.2 9.3 8.5 9.3 V13.5" fill="#d42030" stroke="#fff" strokeWidth="0.8" />
          <path d="M4.5 11 C3.2 7.5 4.2 4.5 7 3.5" fill="none" stroke="#f4a0a8" strokeWidth="0.8" />
        </svg>
        <h1 className="ml-[5px] text-xs">Promob Catalog</h1>
        <div className="ml-auto flex gap-9 pr-[19px]">
          <button type="button" aria-label="Minimizar"><svg viewBox="0 0 10 10" className="size-2.5"><path d="M0 3.5 H10" stroke="#000" /></svg></button>
          <button type="button" aria-label="Restaurar"><svg viewBox="0 0 10 10" className="size-2.5" fill="none"><path d="M0.5 2.5 H7.5 V9.5 H0.5 Z M2.5 2.5 V0.5 H9.5 V7.5 H7.5" stroke="#000" /></svg></button>
          <button type="button" aria-label="Fechar"><svg viewBox="0 0 10 10" className="size-2.5"><path d="M0 0 L10 10 M10 0 L0 10" stroke="#000" /></svg></button>
        </div>
      </header>
      <div className="shrink-0 bg-linear-to-r from-[#f0f0f0] to-[#fcfcfc]">
        <MenuBar />
        <Toolbar />
      </div>
      <Main />
      <div className="flex h-[23px] shrink-0 items-end pl-[26px]">
        {tabs.map((t) => (
          <button key={t.label} type="button" className="-mr-px flex h-5 items-center gap-1 rounded-t border border-b-0 border-[#787878] bg-[#f0f0f0] pl-[3px] pr-1.5 text-[#6d6d6d]">
            {I[t.icon]}
            <span>{t.label}</span>
          </button>
        ))}
      </div>
      <footer className="flex h-5 shrink-0 items-center justify-between bg-linear-to-r from-[#f0f0f0] to-[#fcfcfc] pl-[3px] pr-[17px]">
        <p className="pt-[3px]">Selecionado: Piso -&gt; Piso Teto (5000x5x5000) - (Área: 25 m²) - (Normal: 0; 0; 1 Rotação: 0)</p>
        <div className="flex items-center">
          <button type="button" className="flex items-center gap-0.5">{I.glasses}<span>Mostrar</span><span className="ml-1"><Caret /></span></button>
          <button type="button" className="ml-[9px] flex h-5 items-center gap-0.5 border border-b-0 border-[#0078d7] pl-0.5 pr-[5px]">{I.collide}<span>Colisão</span></button>
          <button type="button" className="ml-[5px] flex h-5 items-center gap-0.5 border border-b-0 border-[#0078d7] pl-0.5 pr-[5px]">{I.joints}<span>Junções</span></button>
          <button type="button" className="ml-2 flex items-center gap-[3px]">{I.lower}<span>Auto Rebaixar</span></button>
          <button type="button" aria-label="Configurar" className="ml-4">{I.wrench}</button>
        </div>
      </footer>
    </div>
  );
}
